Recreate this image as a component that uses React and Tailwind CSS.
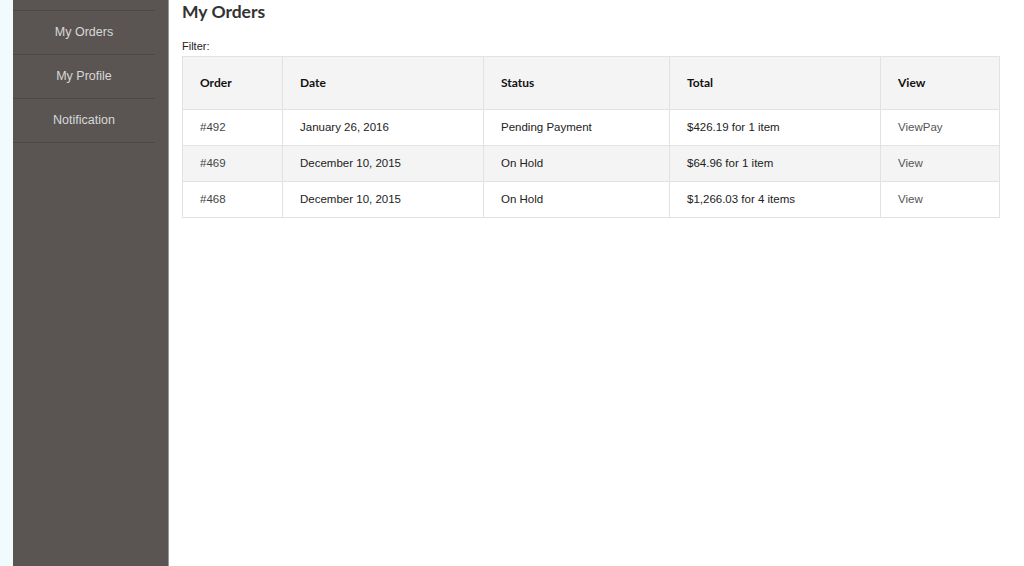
import React from 'react'

const orders = [
  { id: '#492', date: 'January 26, 2016', status: 'Pending Payment', total: '$426.19 for 1 item', view: 'ViewPay' },
  { id: '#469', date: 'December 10, 2015', status: 'On Hold', total: '$64.96 for 1 item', view: 'View' },
  { id: '#468', date: 'December 10, 2015', status: 'On Hold', total: '$1,266.03 for 4 items', view: 'View' },
]

const menu = ['My Orders', 'My Profile', 'Notification']

export default function App() {
  return (
    <div className="flex h-[566px] w-[1024px] overflow-hidden bg-white font-['Liberation_Sans',Arial,sans-serif]">
      {/* left gutter */}
      <div className="w-[13px] shrink-0 bg-[#f1fafc]" />

      {/* Sidebar */}
      <aside className="w-[156px] shrink-0 bg-[#5a5553] border-r border-[#9a9795] pt-[10px]">
        <ul className="mr-[13px] border-t border-[#4c4846]">
          {menu.map((m) => (
            <li
              key={m}
              className="h-[44px] flex items-center justify-center border-b border-[#4c4846] text-[12.5px] text-[#d8d8d8]"
            >
              {m}
            </li>
          ))}
        </ul>
      </aside>

      {/* Main */}
      <main className="flex-1 pl-[13px] pr-[24px]">
        <h1 className="font-['Lato',sans-serif] font-bold text-[17.5px] leading-[24px] text-[#333] mt-0">
          My Orders
        </h1>
        <p className="text-[11px] text-[#222] mt-[15px] leading-[14px] mb-[3px]">Filter:</p>

        <table className="w-[817px] border-collapse table-fixed text-[11.5px] text-[#222]">
          <colgroup>
            <col className="w-[100px]" />
            <col className="w-[201px]" />
            <col className="w-[186px]" />
            <col className="w-[211px]" />
            <col className="w-[119px]" />
          </colgroup>
          <thead>
            <tr className="bg-[#f4f4f4] h-[53px]">
              {['Order', 'Date', 'Status', 'Total', 'View'].map((h) => (
                <th
                  key={h}
                  className="border border-[#e2e2e2] pl-[17px] text-left font-['Lato',sans-serif] font-bold text-[12px] text-[#111]"
                >
                  {h}
                </th>
              ))}
            </tr>
          </thead>
          <tbody>
            {orders.map((o, i) => (
              <tr key={o.id} className={`h-[36px] ${i % 2 === 1 ? 'bg-[#f4f4f4]' : 'bg-white'}`}>
                <td className="border border-[#e2e2e2] pl-[17px] text-[#444]">{o.id}</td>
                <td className="border border-[#e2e2e2] pl-[17px]">{o.date}</td>
                <td className="border border-[#e2e2e2] pl-[17px]">{o.status}</td>
                <td className="border border-[#e2e2e2] pl-[17px]">{o.total}</td>
                <td className="border border-[#e2e2e2] pl-[17px] text-[#555]">{o.view}</td>
              </tr>
            ))}
          </tbody>
        </table>
      </main>
    </div>
  )
}
